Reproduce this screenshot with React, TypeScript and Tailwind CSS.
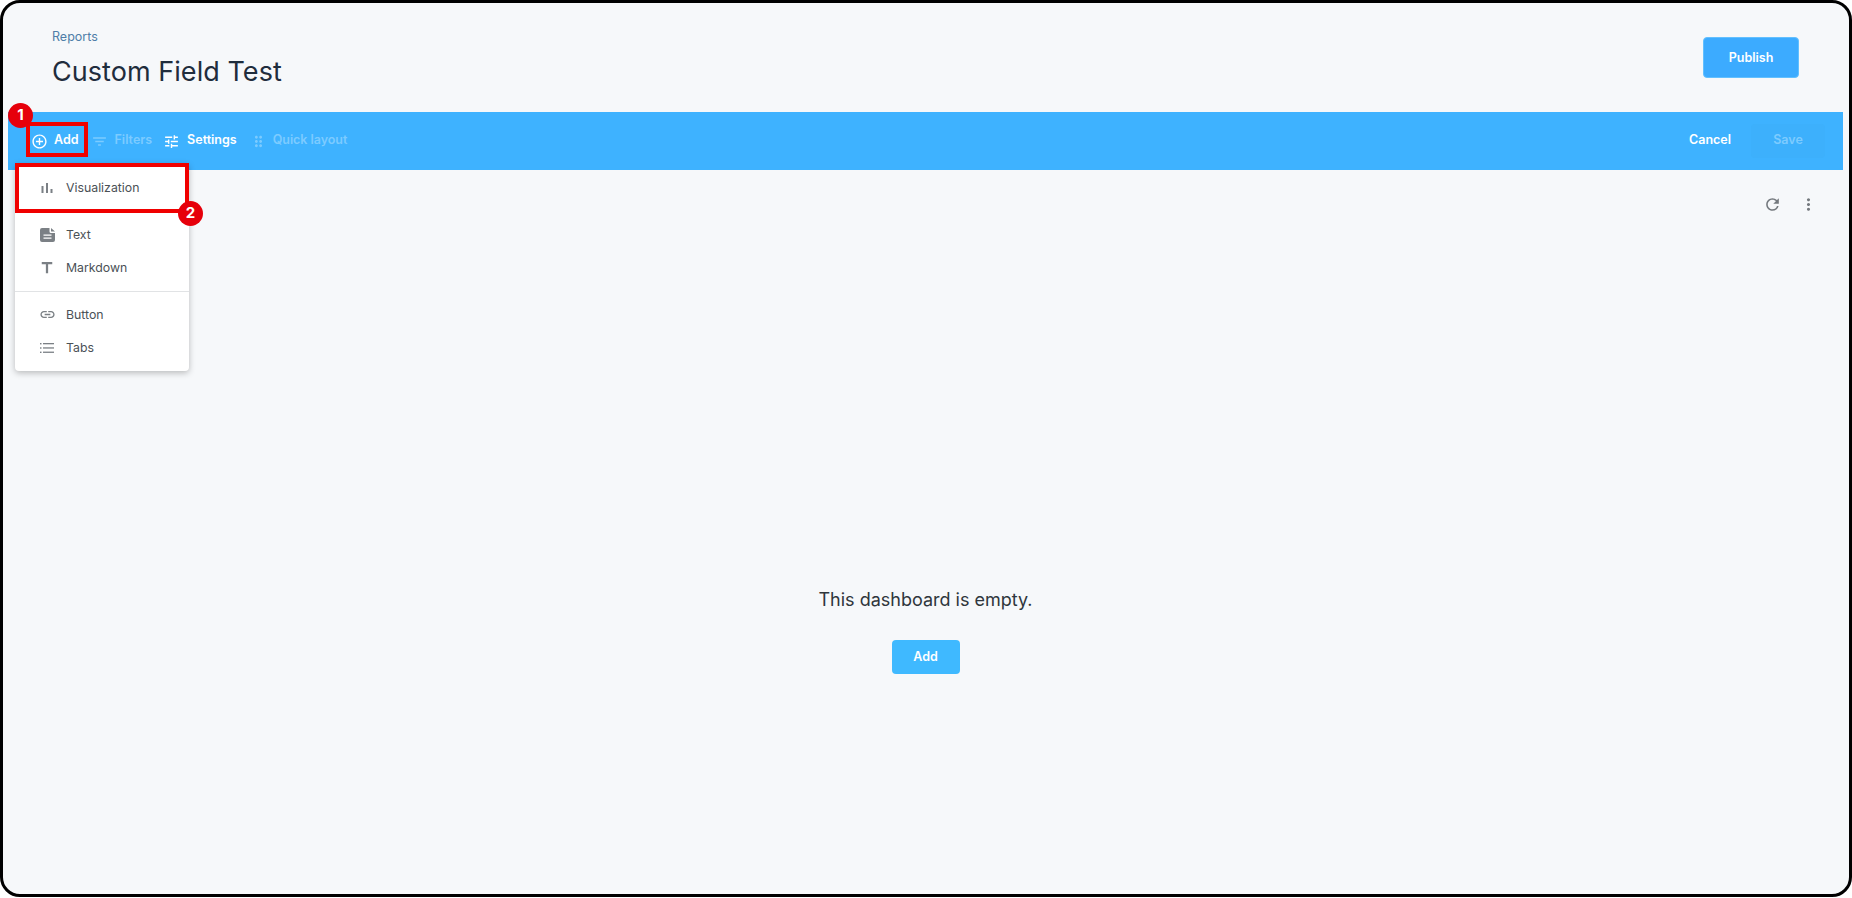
import React from 'react';
import {
  MdAddCircleOutline,
  MdDragIndicator,
  MdFilterList,
  MdLink,
  MdMoreVert,
  MdRefresh,
  MdTitle,
  MdTune,
} from 'react-icons/md';

const font = { fontFamily: 'Inter, "Liberation Sans", sans-serif' };

const BarsIcon = () => (
  <svg width="14" height="14" viewBox="0 0 14 14" fill="currentColor">
    <rect x="1.5" y="5" width="2" height="7" />
    <rect x="6" y="2" width="2" height="10" />
    <rect x="10.5" y="8" width="2" height="4" />
  </svg>
);

const DocIcon = () => (
  <svg width="15" height="14" viewBox="0 0 15 14" fill="currentColor">
    <path
      fillRule="evenodd"
      d="M2 0h7.500v3.500a1.500 1.500 0 0 0 1.500 1.500h4v7a2 2 0 0 1-2 2H2a2 2 0 0 1-2-2V2a2 2 0 0 1 2-2Zm1.500 6.500v1.200h8V6.500h-8Zm0 3v1.200h8V9.500h-8ZM11 0l4 3.500h-4V0Z"
    />
  </svg>
);

const ListIcon = () => (
  <svg width="14" height="12" viewBox="0 0 14 12" fill="currentColor">
    <rect x="0" y="1" width="1.5" height="1.4" />
    <rect x="0" y="5.300" width="1.5" height="1.4" />
    <rect x="0" y="9.600" width="1.5" height="1.4" />
    <rect x="3" y="1" width="11" height="1.300" />
    <rect x="3" y="5.300" width="11" height="1.300" />
    <rect x="3" y="9.600" width="11" height="1.300" />
  </svg>
);

const MenuItem = ({ icon, label }: { icon: React.ReactNode; label: string }) => (
  <div className="flex h-[33px] items-center pl-[20px]">
    <span className="flex w-[24px] justify-center text-[#7b8085]">{icon}</span>
    <span className="ml-[7px] pt-[1px] text-[12.300px] text-[#4b5156]">{label}</span>
  </div>
);

const Badge = ({ n, className }: { n: number; className: string }) => (
  <span
    className={`absolute flex h-[25px] w-[25px] items-center justify-center rounded-full bg-[#e6000b] text-[15px] font-bold text-white ${className}`}
  >
    {n}
  </span>
);

export default function App() {
  return (
    <div className="h-[898px] w-full bg-white" style={font}>
      <div className="relative flex h-[897px] flex-col rounded-[20px] border-[3px] border-black bg-[#f6f8fa] pl-[5px] pr-[6px]">
        {/* Header */}
        <div className="flex h-[109px] shrink-0 items-start justify-between pl-[44px] pr-[44px]">
          <div className="pt-[25px]">
            <div className="text-[12.500px] leading-[18px] text-[#4f7ea8]">Reports</div>
            <h1 className="mt-[8px] text-[27px] leading-[36px] tracking-[0.05px] text-[#1f2d3d]">Custom Field Test</h1>
          </div>
          <button
            type="button"
            className="mt-[34px] h-[41px] w-[96px] rounded-[4px] border border-[#62c0ff] bg-[#3cabff] pt-[1px] text-[12.500px] font-semibold text-white"
          >
            Publish
          </button>
        </div>

        {/* Edit toolbar */}
        <div className="flex h-[58px] shrink-0 items-center justify-between bg-[#3eb2ff] pl-[23px] pr-[18px] text-[12.500px] font-semibold text-white">
          <div className="flex items-center">
            <MdAddCircleOutline size={17} />
            <span className="ml-[6px] -mt-[1px]">Add</span>
            <span className="ml-[12px] flex items-center text-[#7ccbff]">
              <MdFilterList size={17} />
              <span className="ml-[7px] -mt-[1px]">Filters</span>
            </span>
            <span className="ml-[11px] flex items-center">
              <MdTune size={17} />
              <span className="ml-[7px] -mt-[1px]">Settings</span>
            </span>
            <span className="ml-[13px] flex items-center text-[#7ccbff]">
              <MdDragIndicator size={17} />
              <span className="ml-[6px] -mt-[1px] tracking-[-0.05px]">Quick layout</span>
            </span>
          </div>
          <div className="flex items-center">
            <span className="-mt-[1px]">Cancel</span>
            <span className="ml-[20px] flex h-[34px] w-[74px] items-center justify-center rounded-[4px] bg-[#3db0fc] pb-[1px] text-[#7ccbff]">
              Save
            </span>
          </div>
        </div>

        {/* Tile actions */}
        <div className="flex h-[68px] shrink-0 items-center justify-end gap-[17px] pr-[25px] text-[#74797e]">
          <MdRefresh size={19} />
          <MdMoreVert size={19} />
        </div>

        {/* Empty state */}
        <div className="flex flex-col items-center pt-[348px]">
          <p className="text-[18px] leading-[28px] text-[#2f363c]">This dashboard is empty.</p>
          <button
            type="button"
            className="mt-[26px] h-[34px] w-[68px] rounded-[4px] bg-[#3fb9ff] text-[12.500px] font-semibold text-white"
          >
            Add
          </button>
        </div>

        {/* Add menu */}
        <div className="absolute left-[12px] top-[160px] w-[174px] rounded-[4px] bg-white pt-[8px] shadow-[0_2px_6px_rgba(0,0,0,0.25)]">
          <MenuItem icon={<BarsIcon />} label="Visualization" />
          <div className="h-[14px]" />
          <MenuItem icon={<DocIcon />} label="Text" />
          <MenuItem icon={<MdTitle size={18} />} label="Markdown" />
          <div className="mb-[6px] mt-[7px] border-t border-[#e1e3e5]" />
          <MenuItem icon={<MdLink size={17} />} label="Button" />
          <MenuItem icon={<ListIcon />} label="Tabs" />
          <div className="h-[7px]" />
        </div>

        {/* Callouts */}
        <div className="absolute left-[23px] top-[119px] h-[35px] w-[62px] border-[4px] border-[#f00000]" />
        <div className="absolute left-[12px] top-[160px] h-[50px] w-[174px] border-[4px] border-[#f00000]" />
        <Badge n={1} className="left-[5px] top-[100px]" />
        <Badge n={2} className="left-[175px] top-[198px]" />
      </div>
    </div>
  );
}
